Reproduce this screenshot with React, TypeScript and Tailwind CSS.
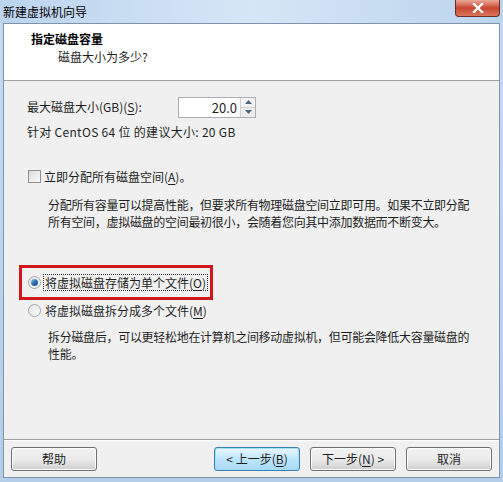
const font = { fontFamily: '"Noto Sans CJK SC", "Noto Sans", sans-serif' };

function WinButton({ label, accel, before, after, active }: { label: string; accel?: string; before?: string; after?: string; active?: boolean }) {
	return (
		<button
			className={
				'h-[24px] w-[86px] rounded-[3px] border text-[12px] leading-none text-[#1e1e1e] flex items-center justify-center ' +
				(active
					? 'border-[#3c7fb1] bg-gradient-to-b from-[#eaf6fd] via-[#bee6fd] to-[#a7d9f5] shadow-[inset_0_0_0_1px_#9ee1f9]'
					: 'border-[#707070] bg-gradient-to-b from-[#f2f2f2] via-[#ebebeb] to-[#cfcfcf] shadow-[inset_0_0_0_1px_#fcfcfc]')
			}
		>
			{before}
			{label}
			{accel && (
				<>
					(<span className="underline underline-offset-2">{accel}</span>)
				</>
			)}
			{after}
		</button>
	);
}

function Radio({ checked }: { checked?: boolean }) {
	return (
		<span className="w-[13px] h-[13px] rounded-full border border-[#a0a8b0] bg-gradient-to-br from-[#e4e4e4] to-[#fbfbfb] flex items-center justify-center shrink-0">
			{checked && <span className="w-[7px] h-[7px] rounded-full bg-gradient-to-br from-[#8ec6ea] via-[#2a6fb0] to-[#1b4f86]" />}
		</span>
	);
}

export default function App() {
	return (
		<div
			style={font}
			className="w-[503px] h-[482px] flex flex-col bg-gradient-to-b from-[#c5dbf2] to-[#b4cde8] text-[12px] text-[#1e1e1e] overflow-hidden"
		>
			{/* title bar */}
			<div className="h-[23px] flex items-start justify-between pl-[3px] pr-[3px] bg-gradient-to-r from-[#bcd4ee] via-[#d6e6f6] to-[#bcd4ee]">
				<span className="mt-[3px] text-[12px] text-black">新建虚拟机向导</span>
				<div className="w-[45px] h-[17px] rounded-b-[4px] border border-[#6b2b26] border-t-0 bg-gradient-to-b from-[#e9a99a] via-[#c9452f] to-[#d8775c] flex items-center justify-center">
					<svg width="12" height="10" viewBox="0 0 12 10">
						<path d="M2 1 L10 9 M10 1 L2 9" stroke="#fff" strokeWidth="2.4" strokeLinecap="square" />
					</svg>
				</div>
			</div>

			{/* client */}
			<div className="flex-1 mx-[3px] mb-[4px] border border-[#7e94aa] bg-[#f0f0f0] flex flex-col">
				<div className="h-[57px] bg-white border-b border-[#a0a0a0] pl-[27px] pt-[7px]">
					<div className="font-bold text-[12px] leading-[16px] text-black">指定磁盘容量</div>
					<div className="pl-[27px] mt-[2px] leading-[16px]">磁盘大小为多少?</div>
				</div>

				<div className="flex-1 pl-[23px] flex flex-col whitespace-nowrap">
					<div className="flex items-center mt-[15px] h-[22px]">
						<span className="w-[151px]">
							最大磁盘大小(GB)(<span className="underline underline-offset-2">S</span>):
						</span>
						<div className="flex h-[21px] w-[78px] border border-[#abadb3] bg-white">
							<span className="flex-1 text-right pr-[3px] leading-[19px] text-[13px]">20.0</span>
							<div className="w-[15px] flex flex-col border-l border-[#d0d0d0]">
								<span className="flex-1 flex items-center justify-center border-b border-[#d0d0d0] bg-[#f4f4f4]">
									<svg width="7" height="4" viewBox="0 0 7 4"><path d="M0 4 L3.5 0 L7 4Z" fill="#4d6185" /></svg>
								</span>
								<span className="flex-1 flex items-center justify-center bg-[#ececec]">
									<svg width="7" height="4" viewBox="0 0 7 4"><path d="M0 0 L3.5 4 L7 0Z" fill="#4d6185" /></svg>
								</span>
							</div>
						</div>
					</div>
					<div className="mt-[5px] leading-[17px] tracking-[0.3px]">针对 CentOS 64 位 的建议大小: 20 GB</div>

					<div className="flex items-center mt-[28px] h-[17px] pl-[1px]">
						<span className="w-[13px] h-[13px] border border-[#8f8f8f] bg-gradient-to-br from-[#dcdcdc] to-[#fbfbfb] shrink-0" />
						<span className="ml-[3px]">
							立即分配所有磁盘空间(<span className="underline underline-offset-2">A</span>)。
						</span>
					</div>
					<div className="pl-[21px] mt-[11px] leading-[17px] tracking-[-0.3px]">
						<div>分配所有容量可以提高性能，但要求所有物理磁盘空间立即可用。如果不立即分配</div>
						<div>所有空间，虚拟磁盘的空间最初很小，会随着您向其中添加数据而不断变大。</div>
					</div>

					<div className="mt-[35px] -ml-[8px] w-[194px] h-[35px] border-[3px] border-[#d3161c] flex items-center pl-[6px]">
						<Radio checked />
						<span className="ml-[3px] outline-1 outline-dotted outline-[#333] px-[1px] leading-[15px]">
							将虚拟磁盘存储为单个文件(<span className="underline underline-offset-2">O</span>)
						</span>
					</div>
					<div className="flex items-center mt-[2px] h-[17px] pl-[1px]">
						<Radio />
						<span className="ml-[4px]">
							将虚拟磁盘拆分成多个文件(<span className="underline underline-offset-2">M</span>)
						</span>
					</div>
					<div className="pl-[21px] mt-[9px] leading-[17px] tracking-[-0.3px]">
						<div>拆分磁盘后，可以更轻松地在计算机之间移动虚拟机，但可能会降低大容量磁盘的</div>
						<div>性能。</div>
					</div>
				</div>

				<div className="border-t border-[#a0a0a0] shadow-[inset_0_1px_0_#fff] h-[38px] flex items-center px-[7px] gap-[10px]">
					<WinButton label="帮助" />
					<div className="flex-1" />
					<WinButton label="上一步" before="< " accel="B" active />
					<WinButton label="下一步" accel="N" after=" >" />
					<WinButton label="取消" />
				</div>
			</div>
		</div>
	);
}
